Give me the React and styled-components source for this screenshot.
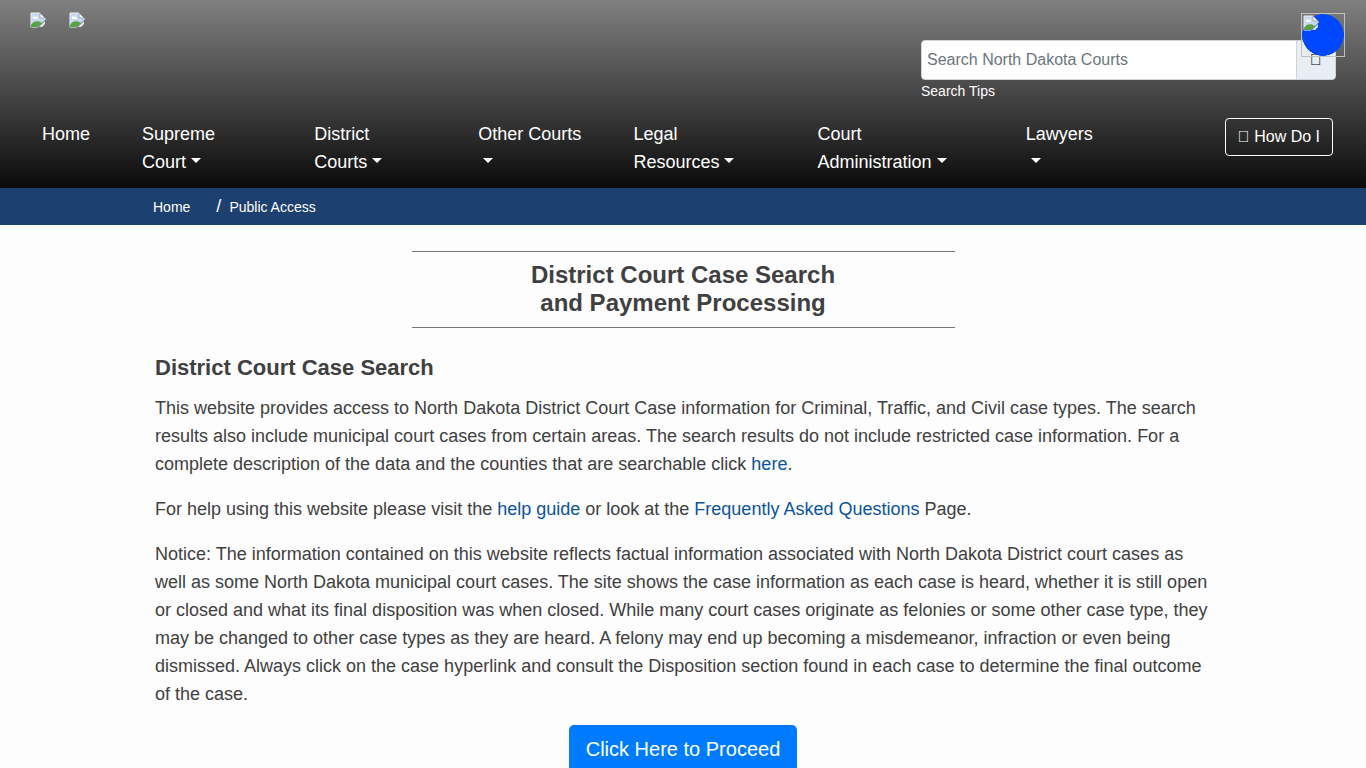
import React from "react";
import styled, { createGlobalStyle } from "styled-components";

const GlobalStyle = createGlobalStyle`
  *, *::before, *::after { box-sizing: border-box; }
  body {
    margin: 0;
    background: #fdfdfe;
    color: #404040;
    font-family: "Liberation Sans", Arial, sans-serif;
    font-size: 18px;
    line-height: 28px;
  }
  a { text-decoration: none; }
`;

const Header = styled.header`
  background: linear-gradient(#808080, #0a0a0a);
  color: #fff;
`;

const TopRow = styled.div`
  display: flex;
  justify-content: space-between;
  padding: 12px 30px 0;
`;

const Logos = styled.div`
  display: flex;
  gap: 23px;
`;

const LogoLink = styled.a`
  display: block;
  height: 16px;
`;

const Icon = styled.svg`
  display: block;
  width: 16px;
  height: 16px;
`;

const Search = styled.form`
  width: 415px;
  padding-top: 28px;
`;

const SearchGroup = styled.div`
  display: flex;
  height: 40px;
  border: 1px solid #ced4da;
  border-radius: 4px;
  overflow: hidden;
  background: #fff;
`;

const SearchInput = styled.input`
  flex: 1;
  min-width: 0;
  border: 0;
  padding: 0 5px;
  color: #495057;
  font: inherit;
  font-size: 16px;
  &::placeholder { color: #6c757d; opacity: 1; }
`;

const SearchButton = styled.button`
  width: 39px;
  border: 0;
  border-left: 1px solid #ced4da;
  padding: 0;
  background: #e9edf4;
  color: #000;
  font: inherit;
  font-size: 16px;
`;

const SmallLink = styled.a`
  display: block;
  color: #fff;
  font-size: 14px;
  line-height: 22px;
`;

const Translate = styled.button`
  position: absolute;
  top: 13px;
  right: 21px;
  display: flex;
  align-items: flex-start;
  width: 44px;
  height: 44px;
  padding: 1px;
  border: 1px solid #c0c0c0;
  background: radial-gradient(circle closest-side, #0048ff 98%, transparent 100%);
`;

const Nav = styled.nav`
  display: flex;
  align-items: flex-start;
  padding: 16px 33px 12px 42px;
`;

const Menu = styled.ul`
  flex: 1;
  display: grid;
  grid-template-columns: 100fr 172fr 164fr 155fr 184fr 208fr 122fr;
  margin: 0 77px 0 0;
  padding: 2px 0 0;
  list-style: none;
`;

const MenuItem = styled.li`
  min-width: 0;
  padding-right: 54px;
`;

const MenuLink = styled.a`
  color: #fff;
  ${(p) => p.$dropdown && `
    &::after {
      content: "";
      display: inline-block;
      margin-left: 5px;
      vertical-align: 5px;
      border-top: 5px solid;
      border-right: 5px solid transparent;
      border-left: 5px solid transparent;
    }
  `}
`;

const HelpButton = styled.button`
  height: 38px;
  padding: 0 12px;
  border: 1px solid #fff;
  border-radius: 4px;
  background: transparent;
  color: #fff;
  font: inherit;
  font-size: 16px;
  line-height: 24px;
  white-space: nowrap;
`;

const Breadcrumb = styled.nav`
  background: #1c4070;
`;

const Crumbs = styled.ol`
  display: flex;
  align-items: center;
  height: 37px;
  margin: 0;
  padding: 0 153px;
  list-style: none;
`;

const Crumb = styled.li`
  display: flex;
  align-items: center;
  & + &::before {
    content: "/";
    padding: 0 8px 2px 26px;
    color: #fff;
  }
`;

const Main = styled.main`
  padding: 26px 155px 0;
`;

const Title = styled.h1`
  width: 543px;
  max-width: 100%;
  margin: 0 auto 26px;
  padding: 9px 0 10px;
  border: solid #777;
  border-width: 1px 0;
  font-size: 24px;
  line-height: 28px;
  text-align: center;
`;

const Subtitle = styled.h2`
  margin: 0 0 13px;
  font-size: 22px;
  line-height: 27px;
`;

const Paragraph = styled.p`
  margin: 0 0 17px;
`;

const TextLink = styled.a`
  color: #0b549c;
`;

const Actions = styled.div`
  display: flex;
  justify-content: center;
  padding-bottom: 40px;
`;

const ProceedButton = styled.a`
  padding: 9px 17px;
  border-radius: 5px;
  background: #007bff;
  color: #fff;
  font-size: 20px;
  line-height: 30px;
`;

const menu = [
  ["Home", false],
  ["Supreme Court", true],
  ["District Courts", true],
  ["Other\u00a0Courts", true],
  ["Legal Resources", true],
  ["Court Administration", true],
  ["Lawyers", true],
];

function BrokenImage() {
  return (
    <Icon viewBox="0 0 16 16" aria-hidden="true">
      <path d="M1 1h9l5 5v2l-7 7H1z" fill="#c6d9f3" stroke="#f0f0f4" />
      <path d="M3 6c0-2 2-2 3-1 2-1 3 2 1 2H3z" fill="#fff" />
      <path d="M1 15v-2c2-4 7-5 11-2l-4 4z" fill="#55a344" />
      <path d="M10 1v5h5z" fill="#fff" stroke="#8f96a5" strokeWidth=".8" />
      <path d="M15 9v3l-3 3H9z" fill="#e6e9ee" />
      <path d="M15 8l-7 7" fill="none" stroke="#777d86" strokeWidth=".7" />
    </Icon>
  );
}

export default function App() {
  return (
    <>
      <GlobalStyle />
      <Header>
        <TopRow>
          <Logos>
            <LogoLink href="#" aria-label="State of North Dakota"><BrokenImage /></LogoLink>
            <LogoLink href="#" aria-label="North Dakota Courts"><BrokenImage /></LogoLink>
          </Logos>
          <Search>
            <SearchGroup>
              <SearchInput type="text" aria-label="Search" placeholder="Search North Dakota Courts" />
              <SearchButton type="button" aria-label="Search">{"\uf002"}</SearchButton>
            </SearchGroup>
            <SmallLink href="#">Search Tips</SmallLink>
          </Search>
        </TopRow>
        <Nav aria-label="Main">
          <Menu>
            {menu.map(([label, dropdown]) => (
              <MenuItem key={label}>
                <MenuLink href="#" $dropdown={dropdown}>{label}</MenuLink>
              </MenuItem>
            ))}
          </Menu>
          <HelpButton type="button">{"\uf059"} How Do I</HelpButton>
        </Nav>
        <Translate type="button" aria-label="Translate"><BrokenImage /></Translate>
      </Header>
      <Breadcrumb aria-label="Breadcrumb">
        <Crumbs>
          <Crumb><SmallLink href="#">Home</SmallLink></Crumb>
          <Crumb><SmallLink href="#">Public Access</SmallLink></Crumb>
        </Crumbs>
      </Breadcrumb>
      <Main>
        <Title>District Court Case Search<br />and Payment Processing</Title>
        <Subtitle>District Court Case Search</Subtitle>
        <Paragraph>
          This website provides access to North Dakota District Court Case information for
          Criminal, Traffic, and Civil case types. The search results also include municipal
          court cases from certain areas. The search results do not include restricted case
          information. For a complete description of the data and the counties that are
          searchable click <TextLink href="#">here</TextLink>.
        </Paragraph>
        <Paragraph>
          For help using this website please visit the <TextLink href="#">help guide</TextLink> or
          look at the <TextLink href="#">Frequently Asked Questions</TextLink> Page.
        </Paragraph>
        <Paragraph>
          Notice: The information contained on this website reflects factual information
          associated with North Dakota District court cases as well as some North Dakota
          municipal court cases. The site shows the case information as each case is heard,
          whether it is still open or closed and what its final disposition was when closed.
          While many court cases originate as felonies or some other case type, they may be
          changed to other case types as they are heard. A felony may end up becoming a
          misdemeanor, infraction or even being dismissed. Always click on the case hyperlink
          and consult the Disposition section found in each case to determine the final
          outcome of the case.
        </Paragraph>
        <Actions>
          <ProceedButton href="#">Click Here to Proceed</ProceedButton>
        </Actions>
      </Main>
    </>
  );
}
